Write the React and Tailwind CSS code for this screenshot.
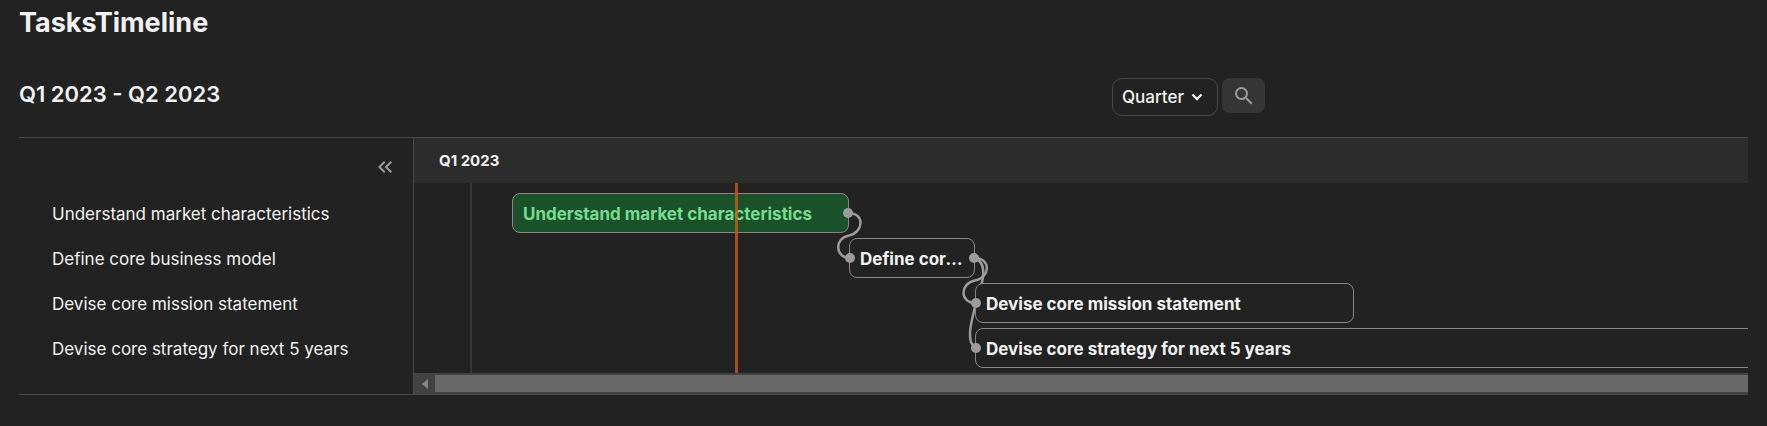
import { MdKeyboardDoubleArrowLeft, MdSearch } from "react-icons/md";

const tasks = [
    { id: 1, name: "Understand market characteristics", left: 98, width: 337, done: true },
    { id: 2, name: "Define core business model", left: 435, width: 126 },
    { id: 3, name: "Devise core mission statement", left: 561, width: 379 },
    { id: 4, name: "Devise core strategy for next 5 years", left: 561, width: 1600 },
];

// finish dot of one bar to the start dot of the next
const links = [
    "M434 30 C452 30 449 50 435 52.5 C420 55 421 75 436 75",
    "M560 75 C578 75 576 95 561 97.5 C546 100 545 120 562 120",
    "M560 75 C574 79 570 97 562 120 C556 143 552 160 562 165",
];

const dots = [
    [434, 30],
    [436, 75],
    [560, 75],
    [562, 120],
    [562, 165],
];

const Toolbar = () => {
    return (
        <div className="mt-[35px] flex items-start">
            <h2 className="w-[1093px] pt-1 text-[22px] leading-7 font-semibold">
                Q1 2023 - Q2 2023
            </h2>
            <div className="flex items-start gap-1 pt-0.5">
                <div className="relative">
                    <select
                        aria-label="Time scale"
                        defaultValue="quarter"
                        className="h-[38px] w-[106px] appearance-none rounded-[10px] border border-[#484848] bg-transparent pl-[9px] text-[17px] leading-7 font-medium"
                    >
                        <option value="week">Week</option>
                        <option value="month">Month</option>
                        <option value="quarter">Quarter</option>
                        <option value="year">Year</option>
                    </select>
                    <svg
                        className="pointer-events-none absolute top-[15px] right-[15px] h-2 w-3"
                        viewBox="0 0 12 8"
                        fill="none"
                        stroke="currentColor"
                        strokeWidth="2.3"
                    >
                        <path d="M1.5 1.5L6 6L10.5 1.5" />
                    </svg>
                </div>
                <button
                    aria-label="Search"
                    className="flex h-[35px] w-[43px] items-center justify-center rounded-lg bg-[#363636] text-[#9b9b9b]"
                >
                    <MdSearch className="h-6 w-6" />
                </button>
            </div>
        </div>
    );
};

const Sidebar = () => {
    return (
        <div className="w-[395px] shrink-0 border-r border-[#484848]">
            <div className="flex h-14 items-center justify-end pt-0.5 pr-4">
                <button aria-label="Collapse task list" className="text-[#9b9b9b]">
                    <MdKeyboardDoubleArrowLeft className="h-6 w-6" />
                </button>
            </div>
            <ul className="flex flex-col gap-[5px] pl-[33px]">
                {tasks.map((task) => (
                    <li key={task.id} className="h-10 text-[17px] leading-10">
                        {task.name}
                    </li>
                ))}
            </ul>
        </div>
    );
};

const Chart = () => {
    return (
        <div className="min-w-0 flex-1">
            <div className="h-[45px] bg-[#2c2c2c] pl-[25px] text-[15px] leading-[45px] font-bold">
                Q1 2023
            </div>
            <div className="relative h-[190px] overflow-hidden">
                <div className="absolute inset-y-0 left-14 w-0.5 bg-[#363636]" />
                <svg
                    className="absolute top-0 left-0 h-[190px] w-[800px]"
                    fill="none"
                    stroke="#9b9b9b"
                    strokeWidth="2.5"
                >
                    {links.map((d) => (
                        <path key={d} d={d} />
                    ))}
                </svg>
                {tasks.map((task, i) => (
                    <div
                        key={task.id}
                        style={{ left: task.left, width: task.width, top: 10 + i * 45 }}
                        className={`absolute h-10 truncate rounded-lg border border-[#868686] px-[10px] text-[17px] leading-10 font-bold ${
                            task.done ? "bg-[#1b5129] text-[#75dd8e]" : "bg-[#222222]"
                        }`}
                    >
                        {task.name}
                    </div>
                ))}
                <svg className="absolute top-0 left-0 h-[190px] w-[800px]" fill="#9b9b9b">
                    {dots.map(([x, y]) => (
                        <circle key={`${x}-${y}`} cx={x} cy={y} r="5" />
                    ))}
                </svg>
                <div className="absolute inset-y-0 left-[321px] w-[3px] bg-[#c55a1c]/80" />
            </div>
            <div className="flex h-[21px] bg-[#424242] py-0.5">
                <div className="flex w-[21px] items-center justify-center">
                    <svg className="h-[10px] w-[6px]" viewBox="0 0 6 10" fill="#868686">
                        <path d="M6 0V10L0 5Z" />
                    </svg>
                </div>
                <div className="flex-1 bg-[#686868]" />
            </div>
        </div>
    );
};

const App = () => {
    return (
        <div className="min-h-screen bg-[#222222] px-[19px] pt-[5px] font-[Inter,sans-serif] text-[#f2f2f2]">
            <h1 className="text-[27px] leading-9 font-bold">TasksTimeline</h1>
            <Toolbar />
            <div className="mt-[21px] flex border-y border-[#484848]">
                <Sidebar />
                <Chart />
            </div>
        </div>
    );
};

export default App;
